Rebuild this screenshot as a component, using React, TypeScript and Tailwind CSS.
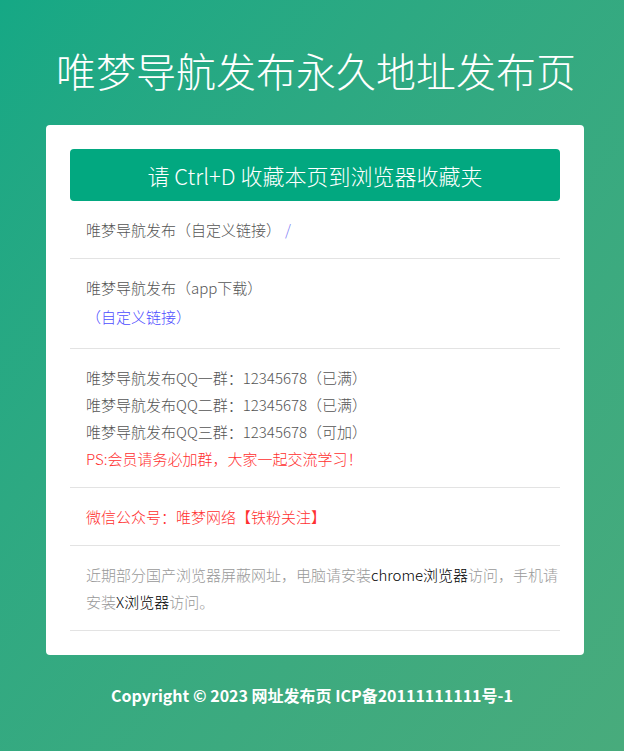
import React from 'react';

const FONT = { fontFamily: '"Noto Sans CJK SC", "Noto Sans", sans-serif' };

export default function App() {
  return (
    <div
      className="min-h-screen w-full bg-gradient-to-br from-[#15a885] to-[#48ab7c] text-[15px]"
      style={FONT}
    >
      <h1 className="pt-[40px] pl-[8px] mb-[25px] text-center text-[40px] leading-[60px] font-light text-white">
        唯梦导航发布永久地址发布页
      </h1>

      <div className="ml-[46px] mr-[40px] bg-white rounded-[4px] px-[24px] pt-[24px] pb-[24px]">
        <div className="h-[52px] rounded-[4px] bg-[#02a880] flex items-center justify-center text-white text-[22px] font-light">
          请 Ctrl+D 收藏本页到浏览器收藏夹
        </div>

        <Row>
          <span className="text-[#555]">唯梦导航发布（自定义链接）</span>
          <span className="text-[#7b7bf5] ml-[4px]">/</span>
        </Row>

        <Row>
          <div className="text-[#555]">唯梦导航发布（app下载）</div>
          <div className="mt-[2px] mb-[3px] text-[#4d4dff]">（自定义链接）</div>
        </Row>

        <Row>
          <div className="text-[#555]">唯梦导航发布QQ一群：12345678（已满）</div>
          <div className="text-[#555]">唯梦导航发布QQ二群：12345678（已满）</div>
          <div className="text-[#555]">唯梦导航发布QQ三群：12345678（可加）</div>
          <div className="text-[#ff3030]">PS:会员请务必加群，大家一起交流学习！</div>
        </Row>

        <Row>
          <span className="text-[#ff3030]">微信公众号：唯梦网络【铁粉关注】</span>
        </Row>

        <Row>
          <p className="text-[#999]">
            近期部分国产浏览器屏蔽网址，电脑请安装<span className="text-black">chrome浏览器</span>访问，手机请安装<span className="text-black">X浏览器</span>访问。
          </p>
        </Row>
      </div>

      <div className="mt-[28px] pb-[30px] text-center text-white text-[16px] leading-[24px] font-semibold">
        Copyright © 2023 网址发布页 ICP备20111111111号-1
      </div>
    </div>
  );
}

function Row({ children }: { children: React.ReactNode }) {
  return (
    <div className="pl-[16px] pr-0 py-[15px] leading-[27px] font-light border-b border-[#e3e3e3]">
      {children}
    </div>
  );
}
